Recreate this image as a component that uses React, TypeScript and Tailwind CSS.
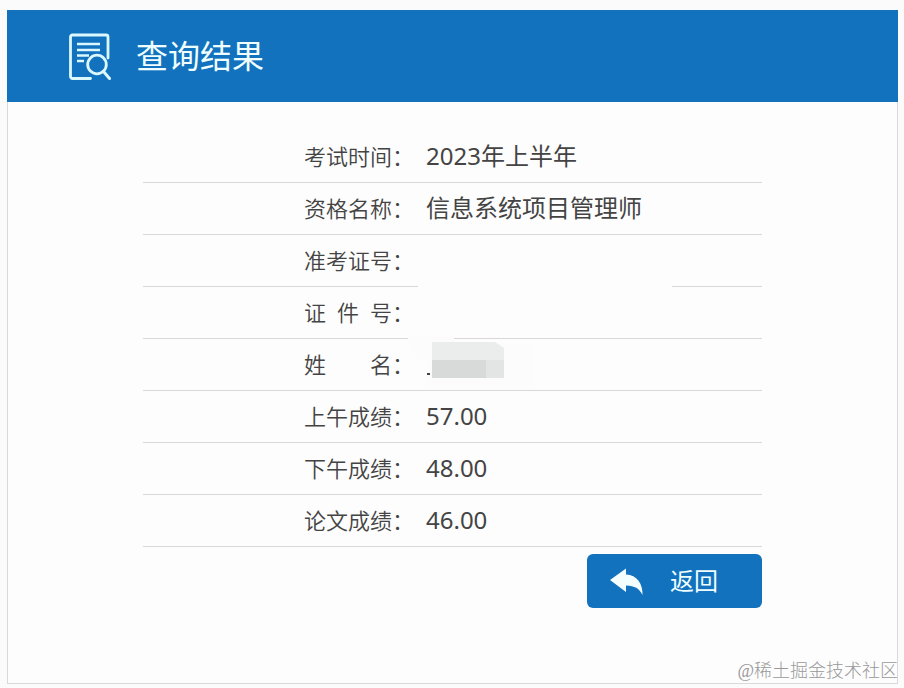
type Result = {
  label: string;
  value?: string;
  cover?: "line" | "name";
};

const results: Result[] = [
  { label: "考试时间", value: "2023年上半年" },
  { label: "资格名称", value: "信息系统项目管理师" },
  { label: "准考证号", cover: "line" },
  { label: "证 件 号" },
  { label: "姓 名", cover: "name" },
  { label: "上午成绩", value: "57.00" },
  { label: "下午成绩", value: "48.00" },
  { label: "论文成绩", value: "46.00" },
];

function ResultIcon() {
  return (
    <svg
      viewBox="0 0 44 48"
      className="w-11 h-12 shrink-0"
      fill="none"
      stroke="#dcf8ff"
      strokeLinecap="round"
      aria-hidden="true"
    >
      <path d="M22.5 46.5H4.5a2 2 0 0 1-2-2V5a2 2 0 0 1 2-2H38a2 2 0 0 1 2 2v21" strokeWidth="2.8" />
      <path d="M9 12H32M9 18H32M9 23.5H21M9 29H16" strokeWidth="2.6" strokeLinecap="butt" />
      <circle cx="29" cy="32.5" r="9.3" strokeWidth="2.8" />
      <path d="M35.5 39.5l6 7" strokeWidth="3" />
    </svg>
  );
}

function BackIcon() {
  return (
    <svg viewBox="0 0 34 28" className="w-[34px] h-7 shrink-0" fill="#f4feff" aria-hidden="true">
      <path d="M0 13L16 1.5V7.5C27 8 33 17 32.5 28C29 21 25 19 16 18.5V25Z" />
    </svg>
  );
}

function NameMosaic() {
  return (
    <svg
      viewBox="0 0 136 56"
      className="absolute -left-2 top-1/2 -translate-y-1/2 w-[136px] h-14"
      aria-hidden="true"
    >
      <path d="M1 0H48V8H126V50H20V28L8 18Z" fill="#fcfcfc" />
      <path d="M26 6H89L98 12V24H26Z" fill="#ebecec" />
      <path d="M26 24H80V42H26Z" fill="#d8dad9" />
      <path d="M80 24H98V42H80Z" fill="#e3e5e4" />
      <path d="M21 37H24V39H21Z" fill="#444" />
    </svg>
  );
}

export default function App() {
  return (
    <div className="relative min-h-screen bg-[#fbfbfb] pl-[7px] pr-1.5 pt-2.5 pb-1 font-['Noto_Sans','Noto_Sans_CJK_SC',sans-serif] text-[#444]">
      <main className="border border-t-0 border-[#d9d9d9] bg-[#fdfdfd] pb-[75px]">
        <header className="-mx-px flex h-[92px] items-center gap-6 bg-[#1272be] pl-[61px] text-[#effeff]">
          <ResultIcon />
          <h1 className="text-[32px] leading-none">查询结果</h1>
        </header>

        <div className="mx-auto w-full max-w-[619px] pt-7">
          <table className="w-full border-collapse">
            <tbody>
              {results.map((r) => (
                <tr key={r.label} className="h-[52px] border-b border-[#d8d8d8]">
                  <th
                    scope="row"
                    className="w-[271px] p-0 text-[22px] font-[350] leading-none"
                  >
                    <span className="flex justify-end">
                      <span className="w-[88px] [text-align-last:justify]">{r.label}</span>
                      <span>：</span>
                    </span>
                  </th>
                  <td className="relative py-0 pr-0 pl-3 text-2xl leading-none">
                    {r.value}
                    {r.cover === "line" && (
                      <span className="absolute left-1 -bottom-1 h-2 w-[254px] bg-[#fdfdfd]" />
                    )}
                    {r.cover === "name" && <NameMosaic />}
                  </td>
                </tr>
              ))}
            </tbody>
          </table>

          <div className="flex justify-end pt-[7px]">
            <button
              type="button"
              className="flex h-[54px] w-[175px] items-center gap-[26px] rounded-md bg-[#1272be] pl-[23px] text-2xl leading-none text-[#effeff]"
            >
              <BackIcon />
              返回
            </button>
          </div>
        </div>
      </main>

      <span className="absolute right-1.5 bottom-2 font-['Liberation_Serif','Noto_Sans_CJK_SC',serif] text-lg font-light leading-none text-[#999]">
        @稀土掘金技术社区
      </span>
    </div>
  );
}
